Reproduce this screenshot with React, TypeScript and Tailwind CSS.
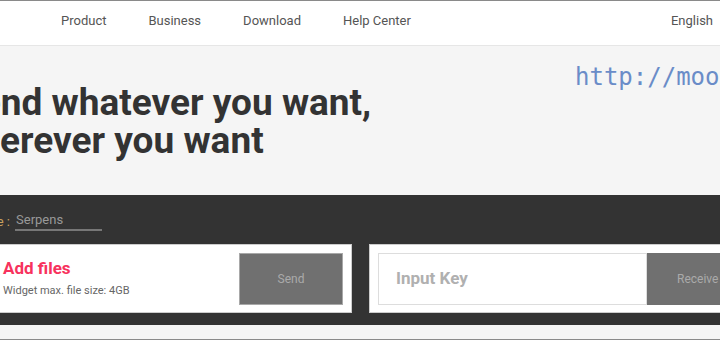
import React from "react";

export default function App() {
  return (
    <div
      className="relative w-[720px] h-[340px] overflow-hidden bg-[#f5f5f5] flex flex-col"
      style={{ fontFamily: "Roboto, 'Liberation Sans', sans-serif" }}
    >
      <header className="h-[46px] shrink-0 bg-white border-t border-[#8a8a8a] border-b border-b-[#e6e6e6] flex items-center pb-[4px] text-[13px] text-[#555]">
        <nav className="flex items-center gap-[42px] pl-[61px]">
          <span>Product</span>
          <span>Business</span>
          <span>Download</span>
          <span>Help Center</span>
        </nav>
        <span className="ml-auto pr-[7px]">English</span>
      </header>

      <section className="relative h-[149px] shrink-0 overflow-hidden">
        <h1 className="mt-[38px] -ml-[42px] text-[37px] leading-[38px] font-bold text-[#333] whitespace-nowrap">
          <div>Send whatever you want,</div>
          <div className="-ml-[11px]">Wherever you want</div>
        </h1>
        <span
          className="absolute left-[575px] top-[13px] text-[24px] text-[#6a8cc8]"
          style={{ fontFamily: "'DejaVu Sans Mono', 'Liberation Mono', monospace" }}
        >
          http://moo
        </span>
      </section>

      <section className="h-[130px] shrink-0 bg-[#333] flex flex-col overflow-hidden">
        <div className="flex items-end h-[36px] -ml-[31px] text-[13px] text-[#999]">
          <span className="text-[#c8a060] mr-[5px]">Name :</span>
          <span className="w-[87px] border-b-2 border-[#777] pl-[1px]">Serpens</span>
        </div>
        <div className="flex mt-[13px] gap-[17px] -ml-[200px]">
          <div className="w-[552px] h-[69px] shrink-0 bg-white border border-[#ccc] flex items-center pl-[202px] pr-[8px]">
            <div className="flex-1 flex flex-col">
              <span className="text-[17px] font-bold text-[#f7325d] leading-[22px]">Add files</span>
              <span className="text-[11px] text-[#666] mt-[4px]">Widget max. file size: 4GB</span>
            </div>
            <button className="w-[104px] h-[52px] bg-[#707070] border border-[#a8a8a8] text-[12px] text-[#aaa]">
              Send
            </button>
          </div>
          <div className="w-[400px] h-[69px] shrink-0 bg-white border border-[#ccc] flex items-center pl-[8px]">
            <div className="w-[269px] h-[52px] border border-[#ddd] flex items-center pl-[17px] text-[17px] font-bold text-[#b0b0b0]">
              Input Key
            </div>
            <button className="w-[104px] h-[52px] bg-[#707070] text-[12px] text-[#aaa] text-left pl-[30px]">
              Receive
            </button>
          </div>
        </div>
      </section>

      <div className="flex-1 border-b border-[#8a8a8a]" />
    </div>
  );
}
